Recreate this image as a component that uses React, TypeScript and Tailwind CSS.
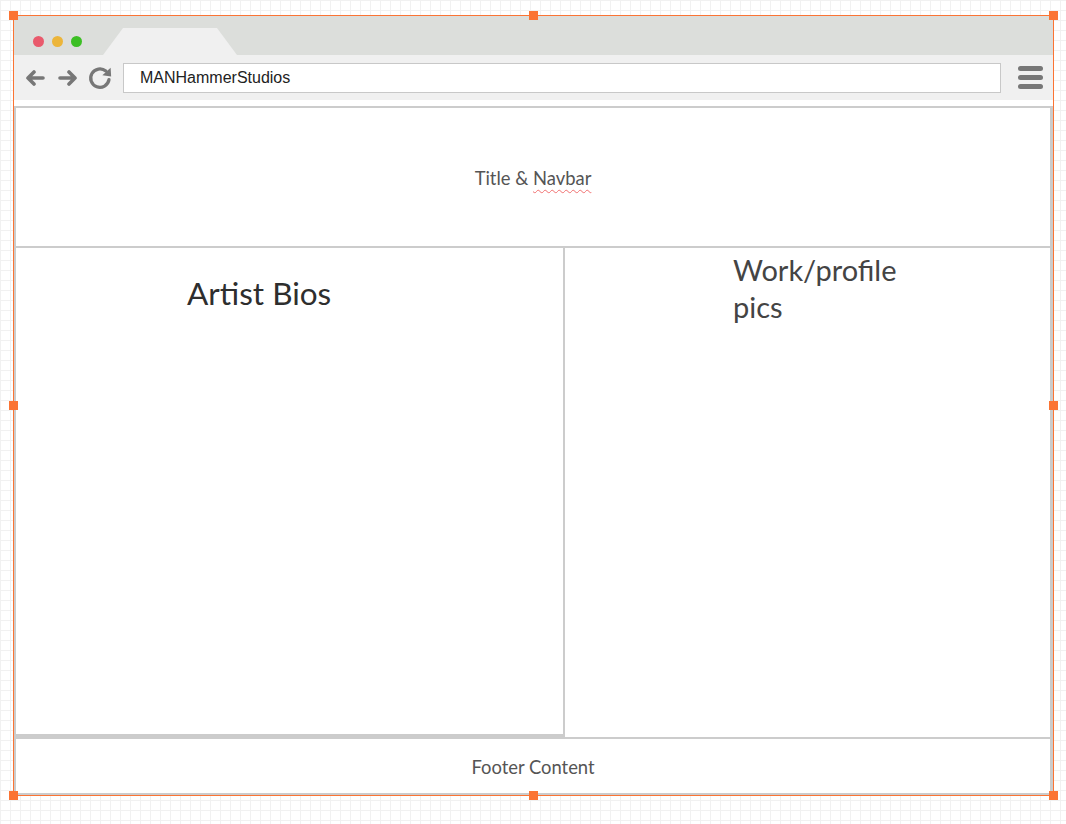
import { ReactNode } from "react";

function Handle({ pos }: { pos: string }) {
  return <div className={`absolute w-[9px] h-[9px] bg-[#fb7434] ${pos}`} />;
}

function Chrome() {
  return (
    <>
      <div className="relative h-[39px] bg-[#dcdedb]">
        <div className="absolute left-[19px] top-[20px] flex gap-[8px]">
          <span className="w-[11px] h-[11px] rounded-full bg-[#e95a6c]" />
          <span className="w-[11px] h-[11px] rounded-full bg-[#ecb53a]" />
          <span className="w-[11px] h-[11px] rounded-full bg-[#3cbf24]" />
        </div>
        <svg className="absolute left-[89px] top-[12px]" width="134" height="27" viewBox="0 0 134 27">
          <polygon points="0,27 20,0 114,0 134,27" fill="#f0f0f0" />
        </svg>
      </div>
      <div className="h-[45px] bg-[#f0f0f0] flex items-center pl-[10px] pr-[10px]">
        <svg width="20" height="16" viewBox="0 0 20 16" className="ml-[1px]">
          <path d="M18 8H3M9 2L3 8l6 6" fill="none" stroke="#777" strokeWidth="3.6" strokeLinecap="round" strokeLinejoin="round" />
        </svg>
        <svg width="20" height="16" viewBox="0 0 20 16" className="ml-[13px]">
          <path d="M2 8h15M11 2l6 6-6 6" fill="none" stroke="#777" strokeWidth="3.6" strokeLinecap="round" strokeLinejoin="round" />
        </svg>
        <svg width="26" height="26" viewBox="0 0 24 24" className="ml-[9px]">
          <path d="M20.3 13.5A8.5 8.5 0 1 1 17.4 5.6" fill="none" stroke="#777" strokeWidth="3" strokeLinecap="round" />
          <polygon points="21.8,2.5 22.3,10.5 14.2,9.5" fill="#777" />
        </svg>
        <div className="ml-[10px] h-[30px] w-[878px] bg-white border border-[#c8c8c8] flex items-center pl-[16px] font-['Liberation_Sans',Arial,sans-serif] text-[16px] text-[#222]">
          MANHammerStudios
        </div>
        <div className="ml-auto flex flex-col gap-[4px]">
          <span className="block w-[25px] h-[5px] rounded-full bg-[#777]" />
          <span className="block w-[25px] h-[5px] rounded-full bg-[#777]" />
          <span className="block w-[25px] h-[5px] rounded-full bg-[#777]" />
        </div>
      </div>
      <div className="h-[6px] bg-white" />
    </>
  );
}

function Label({ children }: { children: ReactNode }) {
  return <span className="text-[18.4px] text-[#555]">{children}</span>;
}

export default function App() {
  return (
    <div className="min-h-[824px] w-full bg-white bg-[linear-gradient(to_right,#f1f1f1_1px,transparent_1px),linear-gradient(to_bottom,#f1f1f1_1px,transparent_1px)] bg-[size:10px_10px] pt-[15px] pl-[13px] font-['Lato','Open_Sans',sans-serif]">
      <div className="relative w-[1041px] h-[781px] border border-[#fb7434] bg-white">
        <Chrome />
        <div className="border-2 border-r-[3px] border-[#cccccc] h-[689px] flex flex-col">
          <div className="h-[140px] shrink-0 border-b-2 border-[#cccccc] flex items-center justify-center pt-[3px]">
            <Label>
              Title &amp; <span className="underline decoration-wavy decoration-[#f07070] decoration-1 underline-offset-[4px]">Navbar</span>
            </Label>
          </div>
          <div className="h-[489px] shrink-0 flex">
            <div className="w-[549px] border-r-2 border-b-[3px] border-[#cccccc] pl-[171px] pt-[27px]">
              <h1 className="text-[31.5px] leading-[36px] text-[#2e2e2e]">Artist Bios</h1>
            </div>
            <div className="flex-1 pl-[168px] pt-[3px]">
              <h2 className="w-[190px] text-[29px] leading-[37px] text-[#444]">Work/profile pics</h2>
            </div>
          </div>
          <div className="flex-1 border-t-2 border-[#cccccc] flex items-center justify-center pt-[3px]">
            <Label>Footer Content</Label>
          </div>
        </div>
        <Handle pos="-left-[5px] -top-[5px]" />
        <Handle pos="left-[515px] -top-[5px]" />
        <Handle pos="-right-[5px] -top-[5px]" />
        <Handle pos="-left-[5px] top-[385px]" />
        <Handle pos="-right-[5px] top-[385px]" />
        <Handle pos="-left-[5px] -bottom-[5px]" />
        <Handle pos="left-[515px] -bottom-[5px]" />
        <Handle pos="-right-[5px] -bottom-[5px]" />
      </div>
    </div>
  );
}
